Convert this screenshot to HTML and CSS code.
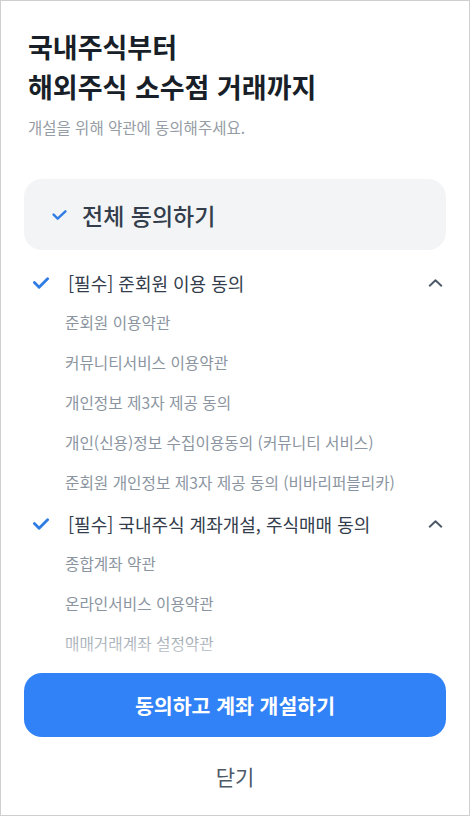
FILE: index.html
```html
<!DOCTYPE html>
<html lang="ko">
<head>
    <meta charset="UTF-8">
    <meta name="viewport" content="width=device-width, initial-scale=1.0">
    <title>계좌 개설 약관 동의</title>
    <link rel="stylesheet" href="styles.css">
</head>
<body>
    <div class="sheet">
        <header class="intro">
            <h1 class="title">국내주식부터<br>해외주식 소수점 거래까지</h1>
            <p class="subtitle">개설을 위해 약관에 동의해주세요.</p>
        </header>

        <button class="all-agree" type="button">
            <svg class="check check-sm" viewBox="0 0 16 11" width="15" height="10">
                <polyline points="1.5,5 6,9.5 14.5,1.5" />
            </svg>
            <span>전체 동의하기</span>
        </button>

        <div class="terms">
            <section class="term-group">
                <div class="term-head">
                    <svg class="check" viewBox="0 0 17 12" width="16" height="12">
                        <polyline points="1.5,5.5 6.5,10.5 15.5,1.5" />
                    </svg>
                    <span class="term-title">[필수] 준회원 이용 동의</span>
                    <svg class="chevron" viewBox="0 0 16 9" width="15" height="8">
                        <polyline points="1.5,7.5 8,1.5 14.5,7.5" />
                    </svg>
                </div>
                <ul class="term-list">
                    <li>준회원 이용약관</li>
                    <li>커뮤니티서비스 이용약관</li>
                    <li>개인정보 제3자 제공 동의</li>
                    <li>개인(신용)정보 수집이용동의 (커뮤니티 서비스)</li>
                    <li>준회원 개인정보 제3자 제공 동의 (비바리퍼블리카)</li>
                </ul>
            </section>

            <section class="term-group">
                <div class="term-head">
                    <svg class="check" viewBox="0 0 17 12" width="16" height="12">
                        <polyline points="1.5,5.5 6.5,10.5 15.5,1.5" />
                    </svg>
                    <span class="term-title">[필수] 국내주식 계좌개설, 주식매매 동의</span>
                    <svg class="chevron" viewBox="0 0 16 9" width="15" height="8">
                        <polyline points="1.5,7.5 8,1.5 14.5,7.5" />
                    </svg>
                </div>
                <ul class="term-list">
                    <li>종합계좌 약관</li>
                    <li>온라인서비스 이용약관</li>
                    <li>매매거래계좌 설정약관</li>
                </ul>
            </section>
        </div>

        <footer class="actions">
            <button class="primary-button" type="button">동의하고 계좌 개설하기</button>
            <button class="close-button" type="button">닫기</button>
        </footer>
    </div>
</body>
</html>
```

FILE: styles.css
```css
:root {
    --primary-color: #3182f6;
    --text-strong: #191f28;
    --text-primary: #333d4b;
    --text-secondary: #8b95a1;
    --text-close: #4e5968;
    --card-background: #f2f4f6;
}

* {
    margin: 0;
    padding: 0;
    box-sizing: border-box;
}

body {
    font-family: 'Noto Sans CJK KR', 'Noto Sans', sans-serif;
    background: #ffffff;
}

button {
    font-family: inherit;
    border: none;
    background: none;
    cursor: pointer;
}

.sheet {
    width: 470px;
    height: 816px;
    border: 1px solid #cfcfcf;
    background: #ffffff;
    display: flex;
    flex-direction: column;
    overflow: hidden;
}

.intro {
    padding: 26px 27px 0;
}

.title {
    font-size: 27px;
    line-height: 40px;
    font-weight: 700;
    color: var(--text-strong);
}

.subtitle {
    margin-top: 9px;
    font-size: 15.5px;
    line-height: 22px;
    color: #959ca5;
}

.all-agree {
    margin: 41px 23px 0;
    height: 71px;
    border-radius: 18px;
    background: var(--card-background);
    display: flex;
    align-items: center;
    gap: 15px;
    padding-left: 28px;
    font-size: 23px;
    font-weight: 500;
    color: var(--text-primary);
    text-align: left;
}

.check polyline,
.chevron polyline {
    fill: none;
    stroke-linecap: round;
    stroke-linejoin: round;
}

.check polyline {
    stroke: #2f7de4;
    stroke-width: 3;
}

.check-sm polyline {
    stroke-width: 2.6;
}

.chevron polyline {
    stroke: var(--text-close);
    stroke-width: 2.2;
}

.terms {
    flex: 1;
    margin-top: 13px;
    position: relative;
    overflow: hidden;
}

/* fade above the fixed buttons */
.terms::after {
    content: '';
    position: absolute;
    left: 0;
    right: 0;
    bottom: 0;
    height: 46px;
    background: linear-gradient(rgba(255, 255, 255, 0), rgba(255, 255, 255, 0.9));
}

.term-head {
    height: 40px;
    display: flex;
    align-items: center;
    padding: 0 26px 0 32px;
}

.term-title {
    flex: 1;
    margin-left: 19px;
    font-size: 18px;
    color: var(--text-primary);
}

.term-list {
    list-style: none;
}

.term-list li {
    height: 40px;
    line-height: 40px;
    padding-left: 64px;
    font-size: 15.7px;
    color: var(--text-secondary);
}

.term-group + .term-group {
    margin-top: 1px;
}

.actions {
    padding: 0 23px;
    display: flex;
    flex-direction: column;
}

.primary-button {
    height: 64px;
    border-radius: 18px;
    background: var(--primary-color);
    color: #ffffff;
    font-size: 20.5px;
    font-weight: 700;
}

.close-button {
    height: 78px;
    font-size: 21px;
    color: var(--text-close);
}
```
